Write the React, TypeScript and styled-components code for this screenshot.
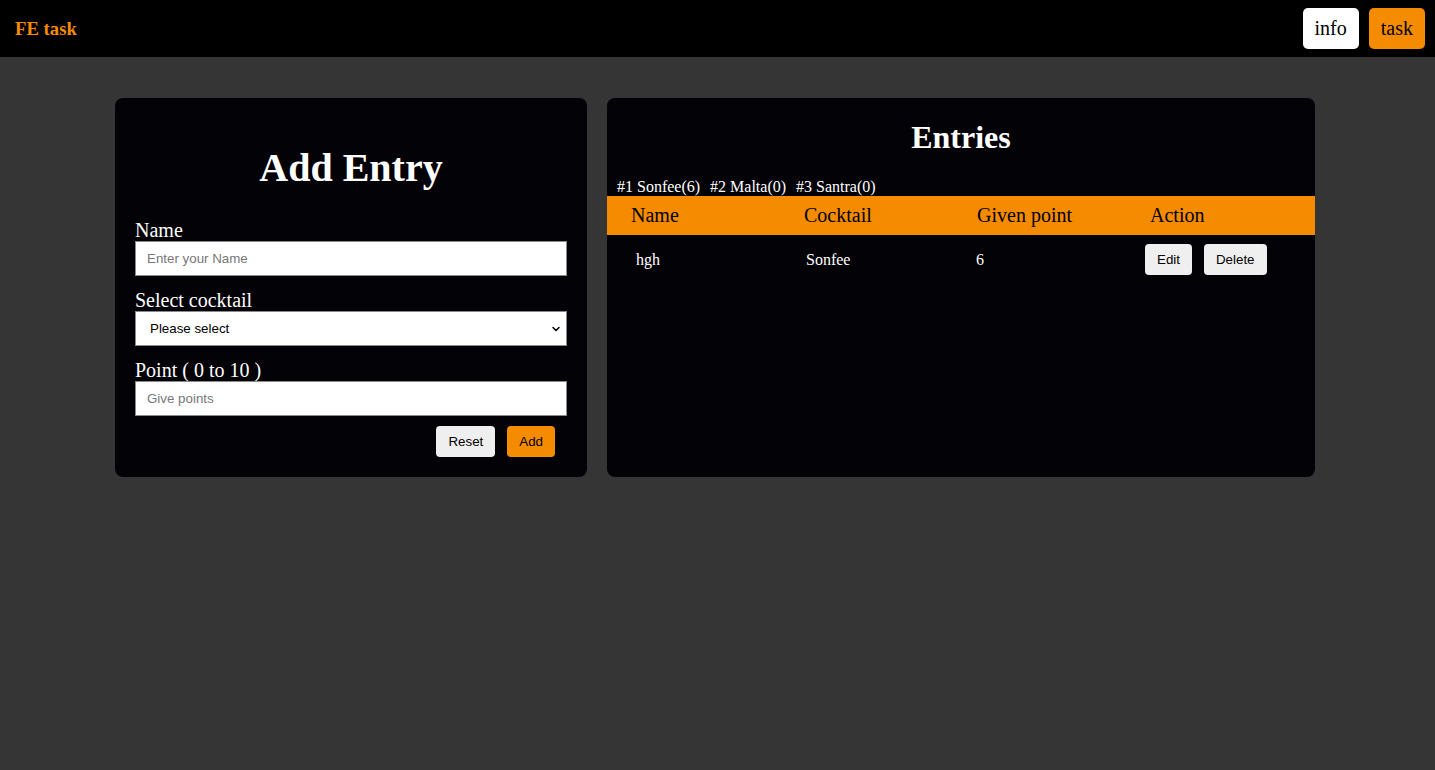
import React from "react";
import styled, { createGlobalStyle } from "styled-components";
import { ChevronDown } from "lucide-react";

const ORANGE = "#f58b00";
const SERIF = `"Liberation Serif", "Times New Roman", serif`;
const SANS = `"Liberation Sans", Arial, sans-serif`;

const GlobalStyle = createGlobalStyle`
  html, body { margin: 0; padding: 0; }
  body {
    background: #353535;
    font-family: ${SERIF};
    min-height: 770px;
  }
  * { box-sizing: border-box; }
`;

const TopBar = styled.header`
  height: 57px;
  background: #000;
  display: flex;
  align-items: center;
  justify-content: space-between;
  padding: 0 10px 0 15px;
`;

const Brand = styled.h3`
  margin: 0;
  font-family: ${SERIF};
  font-size: 18.72px;
  font-weight: bold;
  color: ${ORANGE};
`;

const Nav = styled.nav`
  display: flex;
  gap: 10px;
`;

const NavButton = styled.button<{ $active?: boolean }>`
  height: 41px;
  padding: 0 12px;
  border: none;
  border-radius: 5px;
  font-family: ${SERIF};
  font-size: 20px;
  color: #000;
  background: ${(p) => (p.$active ? ORANGE : "#fff")};
`;

const Main = styled.main`
  display: flex;
  gap: 20px;
  padding: 41px 0 0 115px;
`;

const Card = styled.section<{ $width: number }>`
  width: ${(p) => p.$width}px;
  height: 379px;
  background: #030207;
  border-radius: 8px;
  color: #fff;
`;

const FormCard = styled(Card)`
  padding: 20px;
  display: flex;
  flex-direction: column;
`;

const Title = styled.h1`
  margin: 26px 0 28px;
  text-align: center;
  font-family: ${SERIF};
  font-size: 40px;
  font-weight: bold;
  line-height: normal;
`;

const Field = styled.div`
  display: flex;
  flex-direction: column;
  & + & { margin-top: 13px; }
`;

const Label = styled.label`
  font-family: ${SERIF};
  font-size: 20px;
  line-height: 22px;
  color: #fff;
`;

const TextInput = styled.input`
  height: 35px;
  width: 100%;
  border: 1px solid #8a8a8a;
  background: #fff;
  padding: 0 11px;
  font-family: ${SANS};
  font-size: 13.333px;
  color: #000;
  &::placeholder { color: #777; }
`;

const SelectWrap = styled.div`
  position: relative;
`;

const Select = styled.select`
  appearance: none;
  height: 35px;
  width: 100%;
  border: 1px solid #8a8a8a;
  border-radius: 0;
  background: #fff;
  padding: 0 14px;
  font-family: ${SANS};
  font-size: 13.333px;
  color: #000;
`;

const Chevron = styled(ChevronDown)`
  position: absolute;
  right: 5px;
  top: 12px;
  pointer-events: none;
  color: #000;
`;

const ButtonRow = styled.div`
  display: flex;
  justify-content: flex-end;
  gap: 12px;
  margin-top: 10px;
  padding-right: 12px;
`;

const SmallButton = styled.button<{ $primary?: boolean }>`
  height: 31px;
  padding: 0 12px;
  border: none;
  border-radius: 4px;
  font-family: ${SANS};
  font-size: 13.333px;
  color: #000;
  background: ${(p) => (p.$primary ? ORANGE : "#efefef")};
`;

const EntriesCard = styled(Card)`
  padding-top: 21px;
`;

const SubTitle = styled.h2`
  margin: 0 0 22px;
  text-align: center;
  font-family: ${SERIF};
  font-size: 32px;
  font-weight: bold;
  line-height: normal;
`;

const Ranking = styled.div`
  display: flex;
  gap: 10px;
  padding-left: 10px;
  font-family: ${SERIF};
  font-size: 16px;
  line-height: 18px;
`;

const HeadRow = styled.div`
  display: grid;
  grid-template-columns: 173px 173px 173px 1fr;
  align-items: center;
  height: 39px;
  padding-left: 24px;
  background: ${ORANGE};
  color: #000;
  font-family: ${SERIF};
  font-size: 20px;
`;

const BodyRow = styled.div`
  display: grid;
  grid-template-columns: 170px 170px 169px 1fr;
  align-items: center;
  padding: 9px 0 9px 29px;
  font-family: ${SERIF};
  font-size: 16px;
`;

const Actions = styled.div`
  display: flex;
  gap: 12px;
`;

const entries = [{ name: "hgh", cocktail: "Sonfee", point: 6 }];
const ranking = ["#1 Sonfee(6)", "#2 Malta(0)", "#3 Santra(0)"];

export default function App() {
  return (
    <>
      <GlobalStyle />
      <TopBar>
        <Brand>FE task</Brand>
        <Nav>
          <NavButton>info</NavButton>
          <NavButton $active>task</NavButton>
        </Nav>
      </TopBar>
      <Main>
        <FormCard $width={472}>
          <Title>Add Entry</Title>
          <Field>
            <Label>Name</Label>
            <TextInput placeholder="Enter your Name" />
          </Field>
          <Field>
            <Label>Select cocktail</Label>
            <SelectWrap>
              <Select defaultValue="">
                <option value="">Please select</option>
                <option>Sonfee</option>
                <option>Malta</option>
                <option>Santra</option>
              </Select>
              <Chevron size={12} strokeWidth={3} />
            </SelectWrap>
          </Field>
          <Field>
            <Label>Point ( 0 to 10 )</Label>
            <TextInput placeholder="Give points" />
          </Field>
          <ButtonRow>
            <SmallButton>Reset</SmallButton>
            <SmallButton $primary>Add</SmallButton>
          </ButtonRow>
        </FormCard>
        <EntriesCard $width={708}>
          <SubTitle>Entries</SubTitle>
          <Ranking>
            {ranking.map((r) => (
              <span key={r}>{r}</span>
            ))}
          </Ranking>
          <HeadRow>
            <span>Name</span>
            <span>Cocktail</span>
            <span>Given point</span>
            <span>Action</span>
          </HeadRow>
          {entries.map((e) => (
            <BodyRow key={e.name}>
              <span>{e.name}</span>
              <span>{e.cocktail}</span>
              <span>{e.point}</span>
              <Actions>
                <SmallButton>Edit</SmallButton>
                <SmallButton>Delete</SmallButton>
              </Actions>
            </BodyRow>
          ))}
        </EntriesCard>
      </Main>
    </>
  );
}
